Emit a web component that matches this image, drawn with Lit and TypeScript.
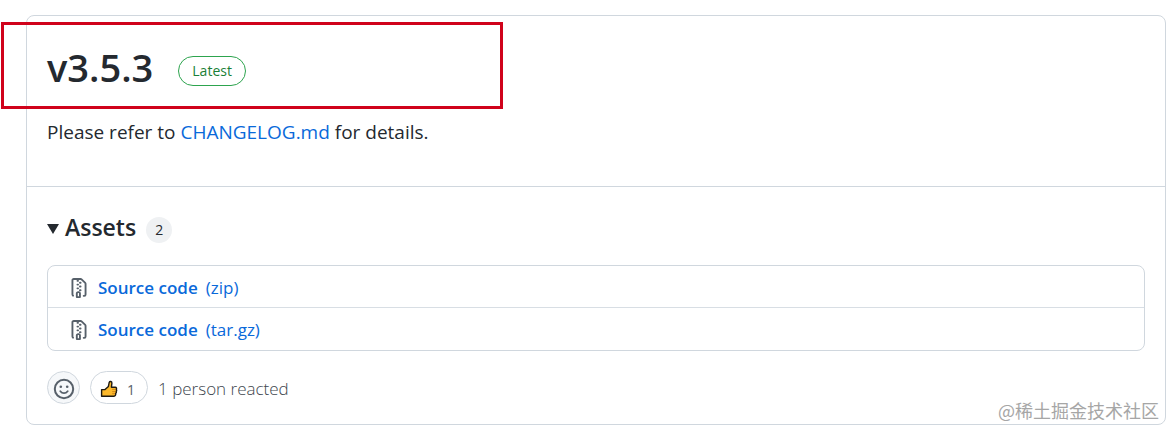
import { LitElement, html, css, svg } from "lit";
import { customElement, property } from "lit/decorators.js";

interface Asset {
  name: string;
  format: string;
}

const zipIcon = svg`<path d="M3.5 1.75v11.5c0 .09.048.173.126.217a.75.75 0 0 1-.752 1.298A1.748 1.748 0 0 1 2 13.25V1.75C2 .784 2.784 0 3.75 0h5.586c.464 0 .909.185 1.237.513l2.914 2.914c.329.328.513.773.513 1.237v8.586A1.75 1.75 0 0 1 12.25 15h-.5a.75.75 0 0 1 0-1.5h.5a.25.25 0 0 0 .25-.25V4.664a.25.25 0 0 0-.073-.177L9.513 1.573a.25.25 0 0 0-.177-.073H7.25a.75.75 0 0 1 0 1.5h-.5a.75.75 0 0 1 0-1.5h-3a.25.25 0 0 0-.25.25Zm3.75 8.75h.5c.966 0 1.75.784 1.75 1.75v3a.75.75 0 0 1-.75.75h-2.5a.75.75 0 0 1-.75-.75v-3c0-.966.784-1.75 1.75-1.75ZM6 5.25a.75.75 0 0 1 .75-.75h.5a.75.75 0 0 1 0 1.5h-.5A.75.75 0 0 1 6 5.25Zm.75 2.25h.5a.75.75 0 0 1 0 1.5h-.5a.75.75 0 0 1 0-1.5ZM8 6.75A.75.75 0 0 1 8.75 6h.5a.75.75 0 0 1 0 1.5h-.5A.75.75 0 0 1 8 6.75ZM8.75 3h.5a.75.75 0 0 1 0 1.5h-.5a.75.75 0 0 1 0-1.5ZM8 9.75A.75.75 0 0 1 8.75 9h.5a.75.75 0 0 1 0 1.5h-.5A.75.75 0 0 1 8 9.75Zm-1 2.5v2.25h1v-2.25a.25.25 0 0 0-.25-.25h-.5a.25.25 0 0 0-.25.25Z"/>`;

@customElement("asset-list")
export class AssetList extends LitElement {
  @property({ attribute: false }) assets: Asset[] = [];

  static styles = css`
    :host {
      display: block;
    }
    .list {
      list-style: none;
      margin: 0;
      padding: 0;
      border: 1px solid #d0d7de;
      border-radius: 8px;
    }
    .row {
      display: flex;
      align-items: center;
      height: 42px;
      padding: 2px 20px 0 21px;
      box-sizing: border-box;
    }
    .row:not(:last-child) {
      border-bottom: 1px solid #d8dee4;
    }
    .icon {
      width: 20px;
      height: 20px;
      margin-right: 9px;
      fill: #57606a;
      flex: none;
    }
    .link {
      display: flex;
      gap: 8px;
      color: #0969da;
      font-size: 17px;
      line-height: 24px;
      text-decoration: none;
    }
    .name {
      font-weight: 600;
    }
  `;

  render() {
    return html`<ul class="list">
      ${this.assets.map(
        (a) => html`<li class="row">
          <svg class="icon" viewBox="0 0 16 16" aria-hidden="true">${zipIcon}</svg>
          <a class="link" href="#${a.format}"><span class="name">${a.name}</span><span>(${a.format})</span></a>
        </li>`
      )}
    </ul>`;
  }
}

@customElement("app-root")
export class AppRoot extends LitElement {
  private assets: Asset[] = [
    { name: "Source code", format: "zip" },
    { name: "Source code", format: "tar.gz" },
  ];

  static styles = css`
    :host {
      display: block;
      position: relative;
      padding: 15px 8px 12px 26px;
      background: #fff;
      color: #24292f;
      font-family: "Open Sans", "Noto Sans", sans-serif;
    }
    .card {
      border: 1px solid #d0d7de;
      border-radius: 8px;
    }
    .release {
      padding: 24px 20px 40px;
      border-bottom: 1px solid #d0d7de;
    }
    .heading {
      display: flex;
      align-items: center;
      gap: 25px;
    }
    .title {
      margin: 0;
      font-size: 38px;
      font-weight: 600;
      line-height: 54px;
    }
    .latest {
      margin-top: 8px;
      padding: 0 13px;
      border: 1px solid #2da44e;
      border-radius: 16px;
      color: #1a7f37;
      font-size: 14px;
      line-height: 28px;
    }
    .notes {
      margin: 24px 0 0;
      font-size: 19px;
      line-height: 28px;
    }
    .notes a {
      color: #0969da;
      text-decoration: none;
    }
    .assets {
      padding: 22px 20px 20px;
    }
    .summary {
      display: flex;
      align-items: center;
      margin-bottom: 20px;
      list-style: none;
      cursor: pointer;
    }
    .marker {
      width: 12px;
      height: 10px;
      margin: 4px 6px 0 0;
      fill: #24292f;
    }
    .subtitle {
      margin: 0;
      font-size: 23px;
      font-weight: 600;
      line-height: 36px;
    }
    .counter {
      margin: 6px 0 0 10px;
      min-width: 26px;
      border-radius: 13px;
      background: #eff1f3;
      font-size: 14px;
      line-height: 26px;
      text-align: center;
    }
    .reactions {
      display: flex;
      align-items: center;
      gap: 10px;
      margin-top: 20px;
      color: #57606a;
      font-size: 17px;
      line-height: 24px;
    }
    .react,
    .thumb {
      display: flex;
      align-items: center;
      justify-content: center;
      height: 33px;
      box-sizing: border-box;
      border: 1px solid #d0d7de;
      border-radius: 17px;
      font-family: inherit;
      color: #57606a;
      cursor: pointer;
    }
    .react {
      width: 33px;
      padding: 0;
      background: #f6f8fa;
    }
    .thumb {
      gap: 9px;
      padding: 3px 12px 0 9px;
      background: #fff;
      font-size: 14px;
    }
    .reacted {
      margin-top: 3px;
      color: #3d454d;
      font-weight: 300;
    }
    .face {
      width: 22px;
      height: 22px;
      margin-top: 2px;
    }
    .hand {
      width: 18px;
      height: 18px;
    }
    .highlight {
      position: absolute;
      top: 22px;
      left: 1px;
      width: 502px;
      height: 87px;
      box-sizing: border-box;
      border: 3px solid #d0021b;
      pointer-events: none;
    }
    .watermark {
      position: absolute;
      right: 15px;
      bottom: 14px;
      color: #a6a6a6;
      font-family: "Noto Sans CJK SC", sans-serif;
      font-size: 18px;
      line-height: 26px;
    }
  `;

  render() {
    return html`
      <main class="card">
        <section class="release">
          <div class="heading">
            <h1 class="title">v3.5.3</h1>
            <span class="latest">Latest</span>
          </div>
          <p class="notes">Please refer to <a href="#changelog">CHANGELOG.md</a> for details.</p>
        </section>
        <section class="assets">
          <details open>
            <summary class="summary">
              <svg class="marker" viewBox="0 0 12 10" aria-hidden="true"><path d="M0 0h12L6 10z" /></svg>
              <h2 class="subtitle">Assets</h2>
              <span class="counter">${this.assets.length}</span>
            </summary>
            <asset-list .assets=${this.assets}></asset-list>
          </details>
          <div class="reactions">
            <button class="react" type="button" aria-label="Add reaction">
              <svg class="face" viewBox="0 0 22 22" fill="none" stroke="#57606a" stroke-width="2" stroke-linecap="round" aria-hidden="true">
                <circle cx="11" cy="11" r="9.2" />
                <path d="M7.3 13.2c2 2.6 5.4 2.6 7.4 0" stroke-width="1.8" />
                <circle cx="7.8" cy="8.8" r="1.3" fill="#57606a" stroke="none" />
                <circle cx="14.2" cy="8.8" r="1.3" fill="#57606a" stroke="none" />
              </svg>
            </button>
            <button class="thumb" type="button">
              <svg class="hand" viewBox="0 0 18 18" stroke="#1f1a12" stroke-width="1.4" stroke-linejoin="round" aria-hidden="true">
                <path d="M1.6 9.6H5L8.4 6.4 9.2 2.4c.6-1.6 2.8-1 2.7.8l-.5 4h3.8c1.4 0 1.7 1.4 1 2 .7.6.6 1.7-.1 2.2.4.7.3 1.6-.4 2 .2 1.7-.5 2.8-1.7 2.8H1.6z" fill="#fdb92b" />
                <path d="M12.2 9.4h3.4M12.2 11.6h3.4M12.2 13.7h2.8" fill="none" stroke="#c47a12" stroke-width=".8" />
              </svg>
              <span>1</span>
            </button>
            <span class="reacted">1 person reacted</span>
          </div>
        </section>
      </main>
      <div class="highlight"></div>
      <div class="watermark">@稀土掘金技术社区</div>
    `;
  }
}
